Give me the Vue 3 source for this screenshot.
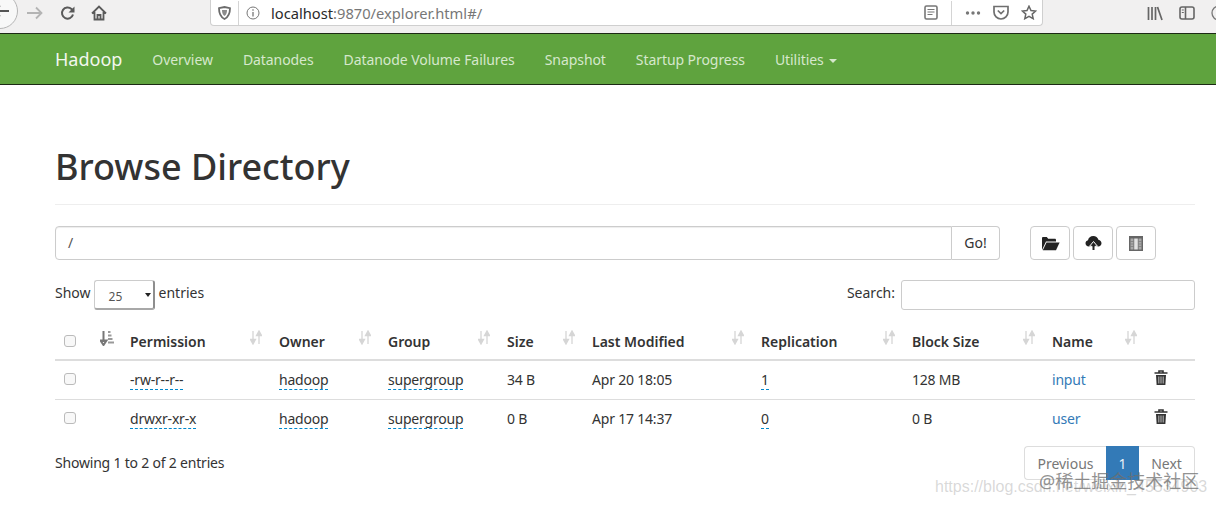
<template>
  <div class="page">
    <!-- browser toolbar -->
    <div class="browser-bar">
      <div class="nav-btns">
        <span class="back-circle">
          <svg width="16" height="14" viewBox="0 0 16 14"><path d="M7 1.500 1.500 7 7 12.500M2 7h14" fill="none" stroke="#555" stroke-width="1.800"/></svg>
        </span>
        <svg class="fwd" width="16" height="14" viewBox="0 0 16 14"><path d="M9 1.500 14.500 7 9 12.500M14 7H0" fill="none" stroke="#b4b4b4" stroke-width="1.800"/></svg>
        <svg class="reload" width="16" height="16" viewBox="0 0 16 16"><path d="M13 9.500A5.600 5.600 0 1 1 11.500 4L13.500 6" fill="none" stroke="#5a5a5a" stroke-width="2"/><path d="M14.500 1.500v6h-6z" fill="#5a5a5a"/></svg>
        <svg class="home" width="16" height="16" viewBox="0 0 16 16"><path d="M1 8.500 8 1.500l7 7M3.500 7v7.500h9V7M6.500 14.500V10h3v4.500" fill="none" stroke="#5a5a5a" stroke-width="1.800"/></svg>
      </div>
      <div class="url-box">
        <svg width="13" height="14" viewBox="0 0 13 14"><path d="M1 2.200 6.500 1 12 2.200c0 5-1.200 8.600-5.500 10.800C2.200 10.800 1 7.200 1 2.200z" fill="none" stroke="#6b6b6b" stroke-width="1.800"/><path d="M4 4h5c0 3-.8 4.800-2.500 6C4.800 8.800 4 7 4 4z" fill="#8a8a8a"/></svg>
        <span class="url-sep"></span>
        <svg width="14" height="14" viewBox="0 0 14 14"><circle cx="7" cy="7" r="6" fill="none" stroke="#777" stroke-width="1"/><path d="M7 6v4.500M7 3.300v1.500" stroke="#777" stroke-width="1.300"/></svg>
        <span class="url-text">localhost<span class="url-rest">:9870/explorer.html#/</span></span>
        <span class="url-tools">
          <svg width="14" height="15" viewBox="0 0 14 15"><rect x="1" y="1" width="12" height="13" rx="1.500" fill="none" stroke="#777" stroke-width="1.600"/><path d="M3.500 4.500h7M3.500 7h7M3.500 9.500h5" stroke="#777" stroke-width="1"/></svg>
          <span class="url-sep tools-sep"></span>
          <svg class="dots" width="16" height="6" viewBox="0 0 16 6"><circle cx="2.500" cy="3" r="1.700" fill="#777"/><circle cx="8" cy="3" r="1.700" fill="#777"/><circle cx="13.500" cy="3" r="1.700" fill="#777"/></svg>
          <svg class="pocket" width="16" height="15" viewBox="0 0 16 15"><path d="M1 1.500h14v5.500a7 7 0 0 1-14 0z" fill="none" stroke="#6f6f6f" stroke-width="1.700"/><path d="M4.800 5.500 8 8.500l3.200-3" fill="none" stroke="#6f6f6f" stroke-width="1.700"/></svg>
          <svg class="star" width="16" height="15" viewBox="0 0 16 15"><path d="M8 1.200 10 5.500l4.700.5-3.500 3.100 1 4.600L8 11.400l-4.200 2.300 1-4.600L1.300 6 6 5.500z" fill="none" stroke="#666" stroke-width="1.500"/></svg>
        </span>
      </div>
      <div class="bar-right">
        <svg width="16" height="15" viewBox="0 0 16 15"><path d="M1.500 1v13M5 1v13M8.500 1v13M10.500 1l4.500 13" fill="none" stroke="#666" stroke-width="1.700"/></svg>
        <svg width="16" height="14" viewBox="0 0 16 14"><rect x="1" y="1" width="14" height="12" rx="2" fill="none" stroke="#666" stroke-width="1.600"/><path d="M6.500 1v12" stroke="#666" stroke-width="1.600"/><path d="M2.800 4h2M2.800 6.500h2" stroke="#666" stroke-width="1"/></svg>
        <svg width="16" height="16" viewBox="0 0 16 16"><circle cx="8" cy="8" r="7" fill="none" stroke="#777" stroke-width="1.300"/></svg>
      </div>
    </div>

    <!-- hadoop navbar -->
    <nav class="navbar">
      <a class="brand">Hadoop</a>
      <a v-for="item in navItems" :key="item" class="nav-link">{{ item }}</a>
      <a class="nav-link">Utilities <span class="caret"></span></a>
    </nav>

    <div class="container">
      <h1 class="page-title">Browse Directory</h1>

      <div class="path-row">
        <div class="path-group">
          <div class="path-input">/</div>
          <button class="go-btn">Go!</button>
        </div>
        <div class="action-btns">
          <button class="icon-btn">
            <svg width="19" height="15" viewBox="0 0 19 15"><path d="M1 14V2.200C1 1.500 1.500 1 2.200 1h3.600l1.400 1.700h6.600c.7 0 1.200.5 1.200 1.200V5.500H5L1 14z" fill="#222"/><path d="M5.500 6.500H18.600L15 14.300H1.800z" fill="#222"/></svg>
          </button>
          <button class="icon-btn">
            <svg width="17" height="16" viewBox="0 0 17 16"><path d="M4 11.500C1.800 11.500.5 10 .5 8.300.5 6.700 1.500 5.500 3 5.200 3.400 2.800 5.500 1 8.300 1c2.500 0 4.500 1.500 5.100 3.800 1.800.2 3.100 1.700 3.100 3.500 0 1.800-1.300 3.200-3.300 3.200z" fill="#222"/><path d="M8.500 6.500 12.500 11.300H10V15.500H7V11.300H4.500z" fill="#222" stroke="#fff" stroke-width="1"/></svg>
          </button>
          <button class="icon-btn">
            <svg width="14" height="15" viewBox="0 0 14 15"><rect width="14" height="15" fill="#666"/><path d="M1.500 2.500h3v11h-3zM9.500 2.500h3v11h-3z" fill="#a9a9a9"/><path d="M5.200 2.500h3.600v11H5.200z" fill="#e2e2e2"/><path d="M1.500 5.500h3M1.500 8h3M1.500 10.500h3M9.500 5.500h3M9.500 8h3M9.500 10.500h3" stroke="#777" stroke-width=".7"/></svg>
          </button>
        </div>
      </div>

      <div class="filter-row">
        <div class="length">
          <span class="filter-label">Show</span>
          <span class="select-box">
            <span class="select-val">25</span>
            <span class="select-arrow"></span>
          </span>
          <span class="filter-label">entries</span>
        </div>
        <div class="search">
          <span class="filter-label">Search:</span>
          <span class="search-input"></span>
        </div>
      </div>

      <table class="files">
        <colgroup>
          <col v-for="(w, i) in colWidths" :key="i" :style="{ width: w + 'px' }" />
        </colgroup>
        <thead>
          <tr>
            <th><span class="check"></span></th>
            <th class="sort-cell">
              <svg width="14" height="15" viewBox="0 0 14 15"><path d="M3.500 0v11M0.500 9.500 3.500 14l3-4.500z" fill="none" stroke="#777" stroke-width="2"/><path d="M8 1h2.500M8 4.500h3.500M8 8h4.500M8 11.500h6" stroke="#999" stroke-width="2"/></svg>
            </th>
            <th v-for="h in headers" :key="h" class="label-cell">
              {{ h }}
              <svg class="sort" width="12" height="15" viewBox="0 0 12 15"><path d="M3 1v10M.5 9.500 3 14l2.500-4.500zM9 14V4M6.500 5.500 9 1l2.500 4.500z" fill="#d6d6d6" stroke="#d6d6d6" stroke-width="1.300"/></svg>
            </th>
            <th></th>
          </tr>
        </thead>
        <tbody>
          <tr v-for="row in rows" :key="row.name">
            <td><span class="check"></span></td>
            <td></td>
            <td><span class="editable">{{ row.perm }}</span></td>
            <td><span class="editable">hadoop</span></td>
            <td><span class="editable">supergroup</span></td>
            <td>{{ row.size }}</td>
            <td>{{ row.modified }}</td>
            <td><span class="editable">{{ row.replication }}</span></td>
            <td>{{ row.block }}</td>
            <td><a class="file-link">{{ row.name }}</a></td>
            <td>
              <svg class="trash" width="14" height="16" viewBox="0 0 14 16"><path d="M5 2.200V1h4v1.200M.5 3h13" fill="none" stroke="#333" stroke-width="1.600"/><path d="M2 5h10l-.6 10H2.600z" fill="#333"/><path d="M4.800 6.500v7M7 6.500v7M9.200 6.500v7" stroke="#aaa" stroke-width="1.200"/></svg>
            </td>
          </tr>
        </tbody>
      </table>

      <div class="table-foot">
        <span class="foot-info">Showing 1 to 2 of 2 entries</span>
        <div class="pager">
          <span class="page-btn prev">Previous</span>
          <span class="page-btn current">1</span>
          <span class="page-btn next">Next</span>
        </div>
      </div>
    </div>

    <!-- watermarks over the screenshot -->
    <span class="mark-url">https://blog.csdn.net/weixin_45534903</span>
    <span class="mark-cn">@稀土掘金技术社区</span>
  </div>
</template>

<script setup>
const navItems = ['Overview', 'Datanodes', 'Datanode Volume Failures', 'Snapshot', 'Startup Progress']
const headers = ['Permission', 'Owner', 'Group', 'Size', 'Last Modified', 'Replication', 'Block Size', 'Name']
const colWidths = [38, 29, 149, 109, 119, 85, 169, 151, 140, 102, 49]
const rows = [
  { perm: '-rw-r--r--', size: '34 B', modified: 'Apr 20 18:05', replication: '1', block: '128 MB', name: 'input' },
  { perm: 'drwxr-xr-x', size: '0 B', modified: 'Apr 17 14:37', replication: '0', block: '0 B', name: 'user' }
]
</script>

<style>
html, body {
  margin: 0;
  background: #fff;
  overflow: hidden;
}
</style>

<style scoped>
.page {
  position: relative;
  width: 1216px;
  height: 507px;
  overflow: hidden;
  font-family: "Noto Sans", "Noto Sans CJK SC", sans-serif;
  font-size: 14px;
  color: #333;
  background: #fff;
}

/* browser toolbar */
.browser-bar {
  height: 33px;
  background: #f1f0f0;
  display: flex;
  align-items: flex-start;
}

.nav-btns {
  width: 210px;
  height: 26px;
  display: flex;
  align-items: center;
  flex-shrink: 0;
}

.back-circle {
  width: 36px;
  height: 36px;
  margin-left: -18px;
  margin-top: -4px;
  border: 1px solid #b5b5b5;
  border-radius: 50%;
  background: #f8f8f8;
  display: flex;
  align-items: center;
  justify-content: flex-end;
  padding-right: 8px;
  box-sizing: border-box;
  flex-shrink: 0;
}

.fwd { margin-left: 9px; }
.reload { margin-left: 17px; }
.home { margin-left: 15px; }

.url-box {
  width: 833px;
  height: 26px;
  flex-shrink: 0;
  background: #fff;
  border: 1px solid #cfcfcf;
  border-top: 0;
  border-radius: 0 0 4px 4px;
  display: flex;
  align-items: center;
  padding-left: 7px;
  padding-right: 5px;
  box-sizing: border-box;
  gap: 7px;
}

.url-sep {
  width: 1px;
  height: 24px;
  background: #d4d4d4;
}

.url-text {
  font-size: 14.7px;
  color: #2a2a2a;
  margin-left: 4px;
}

.url-rest { color: #777; }

.url-tools {
  margin-left: auto;
  display: flex;
  align-items: center;
}

.tools-sep { margin: 0 13px; }
.pocket, .star { margin-left: 12px; }

.bar-right {
  display: flex;
  flex-shrink: 0;
  gap: 16px;
  margin-left: 104px;
  height: 26px;
  align-items: center;
}

.bar-right svg { flex-shrink: 0; }

/* navbar */
.navbar {
  height: 50px;
  background: #5fa33e;
  border-top: 1px solid #1c2a14;
  border-bottom: 1px solid #1c2a14;
  display: flex;
  align-items: center;
  padding-left: 55px;
  color: #d6e8cc;
}

.brand {
  font-size: 18px;
  color: #f2f7ee;
  margin-right: 30px;
}

.nav-link {
  margin-right: 30px;
  font-size: 14px;
  letter-spacing: -0.07px;
}

.caret {
  display: inline-block;
  width: 0;
  height: 0;
  margin-left: 2px;
  vertical-align: middle;
  border-top: 4px solid #d6e8cc;
  border-left: 4px solid transparent;
  border-right: 4px solid transparent;
}

/* content */
.container {
  padding: 0 21px 0 55px;
}

.page-title {
  margin: 0;
  height: 120px;
  padding-top: 57px;
  box-sizing: border-box;
  border-bottom: 1px solid #eee;
  font-size: 36px;
  line-height: 50px;
  font-weight: 500;
  color: #333;
}

.path-row {
  display: flex;
  margin-top: 21px;
}

.path-group {
  display: flex;
  width: 945px;
  height: 34px;
}

.path-input {
  flex: 1;
  border: 1px solid #ccc;
  border-radius: 4px 0 0 4px;
  padding-left: 12px;
  line-height: 32px;
  color: #555;
  box-shadow: inset 0 1px 1px rgba(0, 0, 0, 0.075);
}

.go-btn {
  width: 48px;
  border: 1px solid #ccc;
  border-left: 0;
  border-radius: 0 4px 4px 0;
  background: #fff;
  color: #333;
  font: inherit;
  padding: 0 0 2px;
}

.action-btns {
  display: flex;
  gap: 3px;
  margin-left: 30px;
}

.icon-btn {
  width: 40px;
  height: 34px;
  border: 1px solid #ccc;
  border-radius: 4px;
  background: #fff;
  padding: 0;
  display: flex;
  align-items: center;
  justify-content: center;
}

.filter-row {
  display: flex;
  justify-content: space-between;
  align-items: center;
  margin-top: 20px;
  height: 30px;
}

.length, .search {
  display: flex;
  align-items: center;
}

.filter-label { margin-bottom: 6px; }

.select-box {
  width: 61px;
  height: 30px;
  margin: 0 4px 0 3px;
  box-sizing: border-box;
  border: 1px solid #ccc;
  border-radius: 3px;
  border-right: 2px solid #8e8e8e;
  border-bottom: 2px solid #a8a8a8;
  display: flex;
  align-items: center;
  justify-content: space-between;
  padding: 0 2px 0 14px;
  font-size: 12px;
  color: #555;
  background: #fff;
}

.select-val { margin-top: 3px; }

.select-arrow {
  width: 0;
  height: 0;
  border-top: 4px solid #222;
  border-left: 3px solid transparent;
  border-right: 3px solid transparent;
}

.search-input {
  width: 294px;
  height: 30px;
  box-sizing: border-box;
  margin-left: 6px;
  border: 1px solid #ccc;
  border-radius: 3px;
}

/* table */
.files {
  width: 1140px;
  table-layout: fixed;
  border-collapse: collapse;
  margin-top: 15px;
}

.files th {
  height: 32px;
  padding: 0 8px 2px;
  text-align: left;
  vertical-align: middle;
  font-weight: 600;
  position: relative;
  border-bottom: 2px solid #ddd;
}

.files td {
  height: 36px;
  padding: 0 8px 2px;
  border-bottom: 1px solid #ddd;
  vertical-align: middle;
  letter-spacing: -0.2px;
}

.files tbody tr:last-child td { border-bottom: 0; }

.sort-cell svg { display: block; margin: -5px 0 0 -1px; }

.sort {
  position: absolute;
  right: 9px;
  top: 5px;
}

.check {
  display: block;
  width: 12px;
  height: 12px;
  box-sizing: border-box;
  border: 1px solid #bbb;
  border-radius: 3px;
  background: #f8f8f8;
  margin-left: 1px;
}

.editable {
  border-bottom: 1px dashed #08c;
}

.file-link { color: #337ab7; }

.trash { display: block; margin-top: -2px; }

.table-foot {
  display: flex;
  justify-content: space-between;
  align-items: center;
  margin-top: 8px;
}

.foot-info {
  margin-bottom: 2px;
  letter-spacing: -0.2px;
}

.pager { display: flex; }

.page-btn {
  height: 34px;
  line-height: 33px;
  box-sizing: border-box;
  border: 1px solid #ddd;
  color: #777;
  text-align: center;
}

.prev {
  width: 82px;
  border-right: 0;
  border-radius: 4px 0 0 4px;
}

.current {
  width: 33px;
  background: #337ab7;
  border-color: #337ab7;
  color: #e8f1f8;
}

.next {
  width: 56px;
  border-left: 0;
  border-radius: 0 4px 4px 0;
}

.mark-url {
  position: absolute;
  left: 935px;
  top: 478px;
  font-family: "Liberation Sans", sans-serif;
  font-size: 16px;
  color: rgba(170, 170, 170, 0.45);
  white-space: nowrap;
}

.mark-cn {
  position: absolute;
  left: 1039px;
  top: 467px;
  font-size: 18px;
  color: rgba(110, 110, 110, 0.75);
  white-space: nowrap;
}
</style>
